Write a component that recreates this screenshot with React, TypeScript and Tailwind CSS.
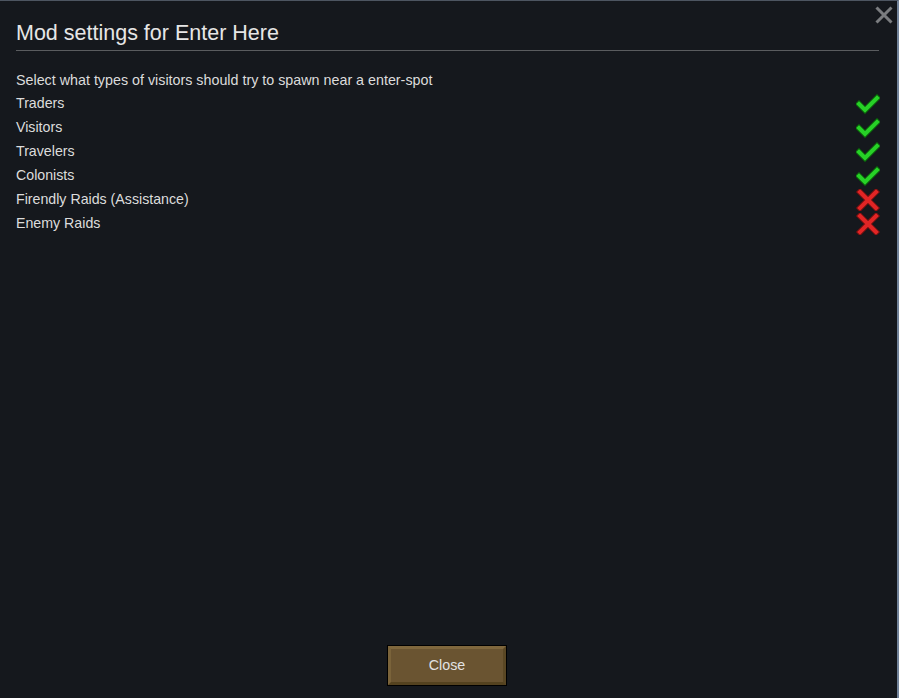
import React from "react";

const options = [
  { label: "Traders", on: true },
  { label: "Visitors", on: true },
  { label: "Travelers", on: true },
  { label: "Colonists", on: true },
  { label: "Firendly Raids (Assistance)", on: false },
  { label: "Enemy Raids", on: false },
];

function Check() {
  return (
    <svg width="24" height="22" viewBox="0 0 24 22">
      <path d="M3 11 L9 17 L21 5" fill="none" stroke="#0b5e0b" strokeWidth="6" strokeLinecap="square" />
      <path d="M3 11 L9 17 L21 5" fill="none" stroke="#27d127" strokeWidth="4" strokeLinecap="square" />
    </svg>
  );
}

function Cross() {
  return (
    <svg width="24" height="22" viewBox="0 0 24 22">
      <path d="M4 3 L20 19 M20 3 L4 19" fill="none" stroke="#6e1010" strokeWidth="6" strokeLinecap="square" />
      <path d="M4 3 L20 19 M20 3 L4 19" fill="none" stroke="#e12525" strokeWidth="4" strokeLinecap="square" />
    </svg>
  );
}

export default function App() {
  return (
    <div
      className="w-[899px] h-[698px] bg-[#15181d] border-t border-t-[#4d5561] border-r-2 border-r-[#72839a] flex flex-col relative text-[#dcdcdc]"
      style={{ fontFamily: '"Liberation Sans", Arial, sans-serif' }}
    >
      {/* close cross */}
      <button className="absolute top-[4px] right-[3px] w-[20px] h-[20px]">
        <svg width="20" height="20" viewBox="0 0 20 20">
          <path d="M2.5 2.5 L17.5 17.5 M17.5 2.5 L2.5 17.5" stroke="#7b7d80" strokeWidth="3" />
        </svg>
      </button>

      <div className="px-4 flex-1 flex flex-col">
        <div className="mt-[20px] mr-[2px] pb-[5px] border-b border-b-[#5a5c5f] text-[21.5px] leading-[24px] text-[#e6e6e6]">
          Mod settings for Enter Here
        </div>

        <div className="mt-[17px] text-[14.3px] leading-[24px]">
          Select what types of visitors should try to spawn near a enter-spot
        </div>

        <div className="flex flex-col">
          {options.map((o) => (
            <div key={o.label} className="flex items-center justify-between h-[24px] text-[14.2px]">
              <span>{o.label}</span>
              <span className="mr-[1px]">{o.on ? <Check /> : <Cross />}</span>
            </div>
          ))}
        </div>

        <div className="flex-1" />

        <div className="flex justify-center mb-[12px]">
          <button className="w-[120px] h-[41px] border border-black bg-[#6a5431] text-[14.3px] text-[#e2e2e2] ml-[-3px]">
            <div className="w-full h-full border-[3px] border-t-[#7f673d] border-l-[#7a633a] border-b-[#54421f] border-r-[#5a4724] flex items-center justify-center">
              Close
            </div>
          </button>
        </div>
      </div>
    </div>
  );
}
